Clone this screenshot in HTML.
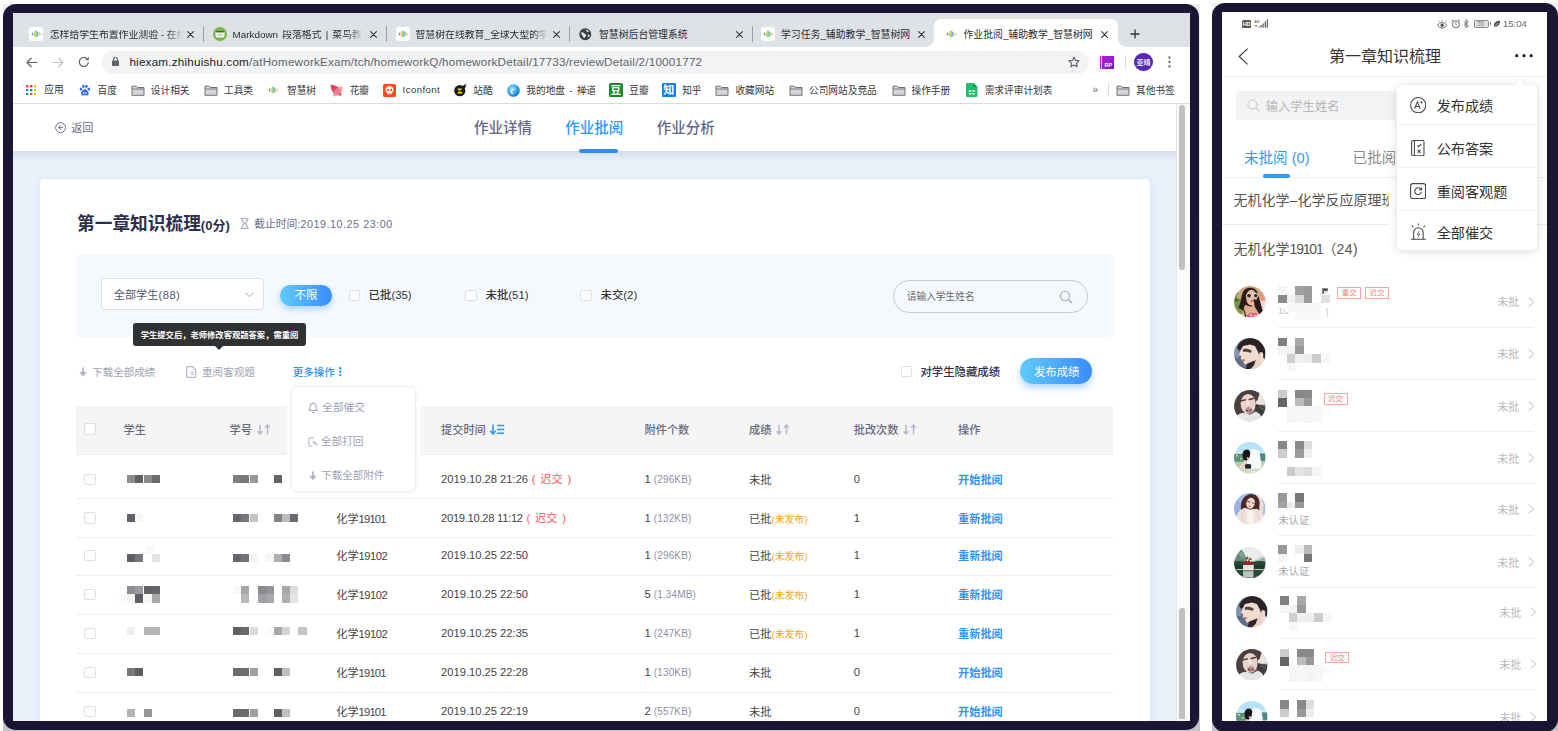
<!DOCTYPE html>
<html lang="zh-CN">
<head>
<meta charset="utf-8">
<title>作业批阅_辅助教学_智慧树网</title>
<style>
*{box-sizing:border-box;margin:0;padding:0}
html,body{width:1558px;height:731px;overflow:hidden;background:#fff}
body{position:relative;font-family:"Liberation Sans","Noto Sans CJK SC",sans-serif;color:#333;-webkit-font-smoothing:antialiased}
.abs,.t,.b{position:absolute}
.t{white-space:nowrap;line-height:1}
.frame{position:absolute;border-style:solid;border-color:#1b1433;border-radius:13px;background:#fff}
.clip{position:absolute;overflow:hidden}
.in{position:absolute}
/* browser chrome */
.tabtxt{font-size:9.85px;color:#2b2e32}
.bm{font-size:9.7px;color:#34373b}
.x{font-size:11px;color:#3c4043}
.sep{position:absolute;width:1px;background:#9aa0a6}
.cb{position:absolute;width:11.5px;height:11.5px;border:1px solid #dcdfe6;border-radius:2px;background:#fff}
.th{font-size:11.2px;color:#66697a;font-weight:500}
.td{font-size:11.2px;color:#444}
.rowline{position:absolute;left:76px;width:1037px;height:1px;background:#ebeef5}
.mz{position:absolute}
.act{font-size:11.2px;color:#3392f6;font-weight:700}
.sm{font-size:10px;color:#8d90a3;letter-spacing:.12px}
.or{font-size:9.8px;color:#f5a623}
.grad{background:linear-gradient(90deg,#5fcbfb 0%,#3a8cfb 100%)}
</style>
</head>
<body>

<!-- ================= LEFT: desktop browser ================= -->
<div class="abs" style="left:2.5px;top:4px;width:1197px;height:727px;background:linear-gradient(180deg,#efefef 0%,#e4e4e6 50%,#c4c4c9 100%)"></div>
<div class="frame" id="frameL" style="left:3px;top:4px;width:1196px;height:726px;border-width:9px 9px 9px 10px"></div>
<div class="clip" id="L" style="left:13px;top:13px;width:1177px;height:708px;background:#e9f2fb">
<div class="in" id="Lc" style="left:-13px;top:-13px;width:1558px;height:731px">

<!-- tab strip -->
<div class="abs" style="left:13px;top:13px;width:1177px;height:34px;background:#dee1e6"></div>
<!-- toolbar + bookmarks -->
<div class="abs" style="left:13px;top:47px;width:1177px;height:56px;background:#fff"></div>
<div class="abs" style="left:13px;top:103px;width:1177px;height:1px;background:#dadce0"></div>

<svg class="abs" style="left:924px;top:19px" width="204" height="28" viewBox="0 0 204 28"><path d="M0 28c5.5 0 10-3 10-9V7c0-4 3-7 7-7h170c4 0 7 3 7 7v12c0 6 4.5 9 10 9z" fill="#fff"/></svg>
<svg class="abs" style="left:29px;top:27px" width="14" height="14" viewBox="0 0 14 14"><rect x="0" y="0" width="14" height="14" rx="3" fill="#fff"/><rect x="1.6" y="6.5" width="1" height="1" rx=".5" fill="#7ac143"/><rect x="3.1" y="5.6" width="1.1" height="2.8" rx=".5" fill="#4a90e2"/><rect x="4.7" y="4.6" width="1.1" height="4.8" rx=".5" fill="#f5c63c"/><rect x="6.35" y="3.6" width="1.3" height="6.8" rx=".6" fill="#6cc04a"/><rect x="8.2" y="4.6" width="1.1" height="4.8" rx=".5" fill="#4a90e2"/><rect x="9.8" y="5.6" width="1.1" height="2.8" rx=".5" fill="#f5c63c"/><rect x="11.4" y="6.4" width="1.1" height="1.2" rx=".5" fill="#ee5350"/></svg>
<span class="t tabtxt" id="tab1" style="left:49.7px;top:30.37px;width:133px;overflow:hidden;-webkit-mask-image:linear-gradient(90deg,#000 88%,transparent 100%)">怎样给学生布置作业测验 - 在线</span>
<svg class="abs" style="left:187.2px;top:30.799999999999997px" width="7" height="7" viewBox="0 0 7 7"><path d="M.6.6l5.8 5.8M6.4.6L.6 6.4" stroke="#30343a" stroke-width="1.1" stroke-linecap="round"/></svg>
<div class="sep" style="left:203px;top:26px;height:16px"></div>
<svg class="abs" style="left:212.8px;top:27.3px" width="14" height="14" viewBox="0 0 14 14"><circle cx="7" cy="7" r="7" fill="#78b943"/><rect x="2.6" y="3.6" width="8.8" height="6.8" rx="1.4" fill="#fff"/><rect x="2.6" y="3.6" width="8.8" height="1.8" rx=".9" fill="#3f6f2a"/><path d="M5.4 6.8L4.5 7.8l.9 1M8.6 6.8l.9 1-.9 1M7.4 6.7l-.8 2.2" stroke="#3f6f2a" stroke-width=".6" fill="none"/></svg>
<span class="t tabtxt" id="tab2" style="word-spacing:1.4px;left:232.6px;top:30.37px;width:130px;overflow:hidden;-webkit-mask-image:linear-gradient(90deg,#000 88%,transparent 100%)">Markdown 段落格式 | 菜鸟教程</span>
<svg class="abs" style="left:370.2px;top:30.799999999999997px" width="7" height="7" viewBox="0 0 7 7"><path d="M.6.6l5.8 5.8M6.4.6L.6 6.4" stroke="#30343a" stroke-width="1.1" stroke-linecap="round"/></svg>
<div class="sep" style="left:386px;top:26px;height:16px"></div>
<svg class="abs" style="left:395.5px;top:27px" width="14" height="14" viewBox="0 0 14 14"><rect x="0" y="0" width="14" height="14" rx="3" fill="#fff"/><rect x="1.6" y="6.5" width="1" height="1" rx=".5" fill="#7ac143"/><rect x="3.1" y="5.6" width="1.1" height="2.8" rx=".5" fill="#4a90e2"/><rect x="4.7" y="4.6" width="1.1" height="4.8" rx=".5" fill="#f5c63c"/><rect x="6.35" y="3.6" width="1.3" height="6.8" rx=".6" fill="#6cc04a"/><rect x="8.2" y="4.6" width="1.1" height="4.8" rx=".5" fill="#4a90e2"/><rect x="9.8" y="5.6" width="1.1" height="2.8" rx=".5" fill="#f5c63c"/><rect x="11.4" y="6.4" width="1.1" height="1.2" rx=".5" fill="#ee5350"/></svg>
<span class="t tabtxt" id="tab3" style="left:415.5px;top:30.37px;width:131px;overflow:hidden;-webkit-mask-image:linear-gradient(90deg,#000 90%,transparent 100%)">智慧树在线教育_全球大型的学分</span>
<svg class="abs" style="left:553px;top:30.799999999999997px" width="7" height="7" viewBox="0 0 7 7"><path d="M.6.6l5.8 5.8M6.4.6L.6 6.4" stroke="#30343a" stroke-width="1.1" stroke-linecap="round"/></svg>
<div class="sep" style="left:569px;top:26px;height:16px"></div>
<svg class="abs" style="left:579px;top:28px" width="12.5" height="12.5" viewBox="0 0 16 16"><circle cx="8" cy="8" r="7.6" fill="#3c4043"/><path d="M3 5.5c1.5-.5 2.5.3 3.5 1.3 1 1 2 .7 2.5 1.7s-.5 2.5-1.5 3.5-1.7 1-2-.2S4.5 10 3.8 9 2.5 6.5 3 5.5zM9 2.3c1.5 0 3 .8 3.8 2.2-.8.8-2 .5-2.8 0S8.5 3 9 2.3zM11.5 8.5c.8-.3 1.8 0 2.3.5-.3 1.5-1 2.5-2 3.2-.5-1-.8-2.7-.3-3.7z" fill="#dee1e6"/></svg>
<span class="t tabtxt" id="tab4" style="left:599px;top:30.37px">智慧树后台管理系统</span>
<svg class="abs" style="left:735.5px;top:30.799999999999997px" width="7" height="7" viewBox="0 0 7 7"><path d="M.6.6l5.8 5.8M6.4.6L.6 6.4" stroke="#30343a" stroke-width="1.1" stroke-linecap="round"/></svg>
<div class="sep" style="left:752px;top:26px;height:16px"></div>
<svg class="abs" style="left:761px;top:27px" width="14" height="14" viewBox="0 0 14 14"><rect x="0" y="0" width="14" height="14" rx="3" fill="#fff"/><rect x="1.6" y="6.5" width="1" height="1" rx=".5" fill="#7ac143"/><rect x="3.1" y="5.6" width="1.1" height="2.8" rx=".5" fill="#4a90e2"/><rect x="4.7" y="4.6" width="1.1" height="4.8" rx=".5" fill="#f5c63c"/><rect x="6.35" y="3.6" width="1.3" height="6.8" rx=".6" fill="#6cc04a"/><rect x="8.2" y="4.6" width="1.1" height="4.8" rx=".5" fill="#4a90e2"/><rect x="9.8" y="5.6" width="1.1" height="2.8" rx=".5" fill="#f5c63c"/><rect x="11.4" y="6.4" width="1.1" height="1.2" rx=".5" fill="#ee5350"/></svg>
<span class="t tabtxt" id="tab5" style="left:781px;top:30.37px">学习任务_辅助教学_智慧树网</span>
<svg class="abs" style="left:918.3px;top:30.799999999999997px" width="7" height="7" viewBox="0 0 7 7"><path d="M.6.6l5.8 5.8M6.4.6L.6 6.4" stroke="#30343a" stroke-width="1.1" stroke-linecap="round"/></svg>
<svg class="abs" style="left:943.5px;top:27px" width="14" height="14" viewBox="0 0 14 14"><rect x="1.6" y="6.5" width="1" height="1" rx=".5" fill="#7ac143"/><rect x="3.1" y="5.6" width="1.1" height="2.8" rx=".5" fill="#4a90e2"/><rect x="4.7" y="4.6" width="1.1" height="4.8" rx=".5" fill="#f5c63c"/><rect x="6.35" y="3.6" width="1.3" height="6.8" rx=".6" fill="#6cc04a"/><rect x="8.2" y="4.6" width="1.1" height="4.8" rx=".5" fill="#4a90e2"/><rect x="9.8" y="5.6" width="1.1" height="2.8" rx=".5" fill="#f5c63c"/><rect x="11.4" y="6.4" width="1.1" height="1.2" rx=".5" fill="#ee5350"/></svg>
<span class="t tabtxt" id="tab6" style="left:963.5px;top:30.37px">作业批阅_辅助教学_智慧树网</span>
<svg class="abs" style="left:1101px;top:30.799999999999997px" width="7" height="7" viewBox="0 0 7 7"><path d="M.6.6l5.8 5.8M6.4.6L.6 6.4" stroke="#30343a" stroke-width="1.1" stroke-linecap="round"/></svg>
<svg class="abs" style="left:1130.3px;top:29.3px" width="10" height="10" viewBox="0 0 10 10"><path d="M5 .5v9M.5 5h9" stroke="#30343a" stroke-width="1.3"/></svg>
<svg class="abs" style="left:25.5px;top:56.5px" width="12" height="11" viewBox="0 0 12 11"><path d="M5.5 1L1 5.5 5.5 10M1.2 5.5H11.5" stroke="#5f6368" stroke-width="1.2" fill="none"/></svg>
<svg class="abs" style="left:52px;top:56.5px" width="12" height="11" viewBox="0 0 12 11"><path d="M6.5 1L11 5.5 6.5 10M10.8 5.5H.5" stroke="#bdc1c6" stroke-width="1.1" fill="none"/></svg>
<svg class="abs" style="left:77.5px;top:56.2px" width="12" height="12" viewBox="0 0 12 12"><path d="M10.3 6A4.5 4.5 0 1 1 8.9 2.7" stroke="#5f6368" stroke-width="1.2" fill="none"/><path d="M10.8.8v3.4H7.4z" fill="#5f6368"/></svg>
<div class="abs" style="left:101.7px;top:51px;width:987px;height:22.5px;border-radius:11.3px;background:#f1f3f4"></div>
<svg class="abs" style="left:112.3px;top:57.3px" width="7" height="9" viewBox="0 0 7 9"><rect x="0" y="3.6" width="7" height="5.4" rx=".8" fill="#5f6368"/><path d="M1.5 4V2.5a2 2 0 0 1 4 0V4" stroke="#5f6368" stroke-width="1.1" fill="none"/></svg>
<span class="t" id="url" style="left:129.4px;top:56.45px;font-size:11.7px;color:#202124;letter-spacing:.2px">hiexam.zhihuishu.com<span style="color:#61656a">/atHomeworkExam/tch/homeworkQ/homeworkDetail/17733/reviewDetail/2/10001772</span></span>
<svg class="abs" style="left:1068.3px;top:56.2px" width="12" height="12" viewBox="0 0 12 12"><path d="M6 1.1l1.5 3.3 3.6.4-2.7 2.4.8 3.5L6 8.9l-3.2 1.8.8-3.5L.9 4.8l3.6-.4z" stroke="#5f6368" stroke-width="1.1" fill="none" stroke-linejoin="round"/></svg>
<div class="abs" style="left:1100px;top:55.5px;width:13.7px;height:13.5px;background:linear-gradient(135deg,#c218c9 0%,#8c1fd6 60%,#6a12b8 100%)"></div>
<div class="abs" style="left:1101.3px;top:55.5px;width:1.2px;height:13.5px;background:#f3b5f6"></div>
<span class="t" style="left:1104.5px;top:63.45px;font-size:5.5px;font-weight:700;color:#fff">RP</span>
<div class="abs" style="left:1125px;top:55px;width:1px;height:14px;background:#dadce0"></div>
<div class="abs" style="left:1134.4px;top:52.8px;width:18.4px;height:18.4px;border-radius:50%;background:#5529b5"></div>
<span class="t" style="left:1136.6px;top:58.7px;font-size:7px;color:#fff;font-weight:500;letter-spacing:-.2px">亚晴</span>
<svg class="abs" style="left:1168px;top:56px" width="3" height="12" viewBox="0 0 3 12"><circle cx="1.5" cy="1.5" r="1.15" fill="#5f6368"/><circle cx="1.5" cy="6" r="1.15" fill="#5f6368"/><circle cx="1.5" cy="10.5" r="1.15" fill="#5f6368"/></svg>
<svg class="abs" style="left:26px;top:84.7px" width="10.4" height="10.4" viewBox="0 0 10.4 10.4"><rect x="0" y="0" width="2.4" height="2.4" fill="#e8453c"/><rect x="4" y="0" width="2.4" height="2.4" fill="#e8453c"/><rect x="8" y="0" width="2.4" height="2.4" fill="#f4b400"/><rect x="0" y="4" width="2.4" height="2.4" fill="#4285f4"/><rect x="4" y="4" width="2.4" height="2.4" fill="#0f9d58"/><rect x="8" y="4" width="2.4" height="2.4" fill="#f4b400"/><rect x="0" y="8" width="2.4" height="2.4" fill="#0f9d58"/><rect x="4" y="8" width="2.4" height="2.4" fill="#e8453c"/><rect x="8" y="8" width="2.4" height="2.4" fill="#f4b400"/></svg>
<span class="t bm" id="bm1" style="left:44.3px;top:85.15px">应用</span>
<svg class="abs" style="left:79px;top:84px" width="11.5" height="12" viewBox="0 0 12 12"><ellipse cx="2" cy="5" rx="1.3" ry="1.7" fill="#2a6be8"/><ellipse cx="4.5" cy="2.2" rx="1.3" ry="1.7" fill="#2a6be8"/><ellipse cx="7.7" cy="2.2" rx="1.3" ry="1.7" fill="#2a6be8"/><ellipse cx="10.2" cy="5" rx="1.3" ry="1.7" fill="#2a6be8"/><path d="M6.1 5.2c1.7 0 2.3 1.4 3.3 2.6 1 1.2 1.1 2.9-.3 3.6-1.2.6-2 .1-3 .1s-1.8.5-3-.1C1.7 10.7 1.8 9 2.8 7.8c1-1.2 1.6-2.6 3.3-2.6z" fill="#2a6be8"/><path d="M4.3 8h1.2v2.3H4.3zM6.6 8.3h1.3v2H6.6z" fill="#fff" opacity=".9"/></svg>
<span class="t bm" id="bm2" style="left:97.6px;top:86.15px">百度</span>
<svg class="abs" style="left:130.5px;top:84.5px" width="14" height="11" viewBox="0 0 14 11"><path d="M1 1.2h4.3l1.1 1.3H13v7.8H1z" fill="#d5d6d8" stroke="#6e7175" stroke-width="1" stroke-linejoin="round"/><path d="M1 4h12" stroke="#6e7175" stroke-width=".9"/></svg>
<span class="t bm" id="bm3" style="left:150.8px;top:86.15px">设计相关</span>
<svg class="abs" style="left:204px;top:84.5px" width="14" height="11" viewBox="0 0 14 11"><path d="M1 1.2h4.3l1.1 1.3H13v7.8H1z" fill="#d5d6d8" stroke="#6e7175" stroke-width="1" stroke-linejoin="round"/><path d="M1 4h12" stroke="#6e7175" stroke-width=".9"/></svg>
<span class="t bm" id="bm4" style="left:224px;top:86.15px">工具类</span>
<svg class="abs" style="left:266.3px;top:83px" width="14" height="14" viewBox="0 0 14 14"><rect x="1.6" y="6.5" width="1" height="1" rx=".5" fill="#7ac143"/><rect x="3.1" y="5.6" width="1.1" height="2.8" rx=".5" fill="#4a90e2"/><rect x="4.7" y="4.6" width="1.1" height="4.8" rx=".5" fill="#f5c63c"/><rect x="6.35" y="3.6" width="1.3" height="6.8" rx=".6" fill="#6cc04a"/><rect x="8.2" y="4.6" width="1.1" height="4.8" rx=".5" fill="#4a90e2"/><rect x="9.8" y="5.6" width="1.1" height="2.8" rx=".5" fill="#f5c63c"/><rect x="11.4" y="6.4" width="1.1" height="1.2" rx=".5" fill="#ee5350"/></svg>
<span class="t bm" id="bm5" style="left:287px;top:86.15px">智慧树</span>
<svg class="abs" style="left:329.8px;top:83.5px" width="13" height="13" viewBox="0 0 13 13"><path d="M.6.8C7 .8 11.400 4.600 11.400 11.800 4.600 11.800.6 7.400.6.8z" fill="#e0485e"/><path d="M12.600 2.200c0 6-3.400 10-9.600 10.200C3.200 6.400 6.800 2.600 12.600 2.200z" fill="#f08a98" opacity=".8"/></svg>
<span class="t bm" id="bm6" style="left:349.7px;top:86.15px">花瓣</span>
<svg class="abs" style="left:382.8px;top:83.5px" width="13" height="13" viewBox="0 0 13 13"><rect width="13" height="13" rx="1.5" fill="#ff4a1a"/><path d="M6.5 2.2c2.3 0 4 1.5 4 3.6 0 1.3-.8 2.3-1.8 2.9v1.5H4.3V8.7C3.3 8.1 2.5 7.1 2.5 5.8c0-2.1 1.7-3.6 4-3.6z" fill="#fff"/><circle cx="4.9" cy="5.9" r="1.1" fill="#ff4a1a"/><circle cx="8.1" cy="5.9" r="1.1" fill="#ff4a1a"/><path d="M5.6 9.2h.6v1.3h-.6zM6.8 9.2h.6v1.3h-.6z" fill="#ff4a1a"/></svg>
<span class="t bm" id="bm7" style="left:402.6px;top:85.15px;letter-spacing:.38px">Iconfont</span>
<svg class="abs" style="left:453.5px;top:83px" width="13.5" height="13.5" viewBox="0 0 14 14"><circle cx="6" cy="8" r="5.8" fill="#1c1c1c"/><path d="M8 3.5l5-3-1.5 3 2.2-.5-3.5 3z" fill="#1c1c1c"/><path d="M3.8 5.8h4.6L5.6 9.4h2.9v1.4H3.3l2.9-3.6H3.8z" fill="#ffd800"/></svg>
<span class="t bm" id="bm8" style="left:473.3px;top:86.15px">站酷</span>
<svg class="abs" style="left:506.5px;top:83.5px" width="13" height="13" viewBox="0 0 13 13"><defs><radialGradient id="zt" cx=".4" cy=".35" r=".7"><stop offset="0" stop-color="#9fe0ff"/><stop offset=".6" stop-color="#2a9fe6"/><stop offset="1" stop-color="#1278c8"/></radialGradient></defs><circle cx="6.5" cy="6.5" r="6.3" fill="url(#zt)"/><path d="M3 7.5c1-2.5 4-3.5 6-2-1.5-.2-3 .3-3.5 1.8s.8 2.7 2.5 2.2c-1.8 1.5-5 .6-5-2z" fill="#e6f7ff" opacity=".9"/></svg>
<span class="t bm" id="bm9" style="left:526.3px;top:86.15px;word-spacing:1.5px">我的地盘 - 禅道</span>
<div class="abs" style="left:609.2px;top:83.3px;width:13.5px;height:13.5px;background:#1d8a2b;border-radius:1.5px"></div><span class="t" style="left:610.5px;top:85.05px;font-size:10.5px;color:#fff;font-weight:700">豆</span>
<span class="t bm" id="bm10" style="left:629.3px;top:86.15px">豆瓣</span>
<div class="abs" style="left:662.2px;top:83.3px;width:13.5px;height:13.5px;background:#1080f0;border-radius:1px"></div><span class="t" style="left:663.3px;top:84.8px;font-size:11px;color:#fff;font-weight:700">知</span>
<span class="t bm" id="bm11" style="left:682.2px;top:86.15px">知乎</span>
<svg class="abs" style="left:715px;top:84.5px" width="14" height="11" viewBox="0 0 14 11"><path d="M1 1.2h4.3l1.1 1.3H13v7.8H1z" fill="#d5d6d8" stroke="#6e7175" stroke-width="1" stroke-linejoin="round"/><path d="M1 4h12" stroke="#6e7175" stroke-width=".9"/></svg>
<span class="t bm" id="bm12" style="left:735.4px;top:86.15px">收藏网站</span>
<svg class="abs" style="left:788.6px;top:84.5px" width="14" height="11" viewBox="0 0 14 11"><path d="M1 1.2h4.3l1.1 1.3H13v7.8H1z" fill="#d5d6d8" stroke="#6e7175" stroke-width="1" stroke-linejoin="round"/><path d="M1 4h12" stroke="#6e7175" stroke-width=".9"/></svg>
<span class="t bm" id="bm13" style="left:809px;top:86.15px">公司网站及竞品</span>
<svg class="abs" style="left:891.5px;top:84.5px" width="14" height="11" viewBox="0 0 14 11"><path d="M1 1.2h4.3l1.1 1.3H13v7.8H1z" fill="#d5d6d8" stroke="#6e7175" stroke-width="1" stroke-linejoin="round"/><path d="M1 4h12" stroke="#6e7175" stroke-width=".9"/></svg>
<span class="t bm" id="bm14" style="left:911.5px;top:86.15px">操作手册</span>
<svg class="abs" style="left:966px;top:83px" width="11.5" height="14" viewBox="0 0 11.5 14"><path d="M1.2 0h6.3l4 4v8.8c0 .7-.5 1.2-1.2 1.2H1.2C.5 14 0 13.5 0 12.8V1.2C0 .5.5 0 1.2 0z" fill="#1fbf6b"/><path d="M7.5 0l4 4h-4z" fill="#12924e"/><path d="M2.8 7.2h2.4v1.6H2.8zM6.3 7.2h2.4v1.6H6.3zM2.8 9.9h2.4v1.6H2.8zM6.3 9.9h2.4v1.6H6.3z" fill="#fff"/></svg>
<span class="t bm" id="bm15" style="left:984.7px;top:86.15px">需求评审计划表</span>
<span class="t" style="left:1092.5px;top:84.5px;font-size:10px;color:#5f6368">»</span>
<div class="abs" style="left:1107.5px;top:83px;width:1px;height:14px;background:#dadce0"></div>
<svg class="abs" style="left:1115.5px;top:84.5px" width="14" height="11" viewBox="0 0 14 11"><path d="M1 1.2h4.3l1.1 1.3H13v7.8H1z" fill="#d5d6d8" stroke="#6e7175" stroke-width="1" stroke-linejoin="round"/><path d="M1 4h12" stroke="#6e7175" stroke-width=".9"/></svg>
<span class="t bm" id="bm16" style="left:1136px;top:86.15px">其他书签</span>

<!-- PAGE -->
<div class="abs" id="pagehead" style="left:13px;top:104px;width:1163px;height:47px;background:#fff"></div>
<div class="abs" style="left:13px;top:151px;width:1163px;height:13px;background:linear-gradient(180deg,#d3deeb 0%,#dde7f3 30%,#e6eff9 70%,#e9f2fb 100%)"></div>
<div class="abs" id="card" style="left:39.5px;top:178.5px;width:1110px;height:560px;background:#fff;border-radius:5px;box-shadow:0 0 10px rgba(170,190,215,.25)"></div>
<div class="abs" id="filter" style="left:76px;top:253.5px;width:1037px;height:83px;background:#f5f9fe;border-radius:4px"></div>
<div class="abs" id="thead" style="left:76px;top:406px;width:1037px;height:48px;background:#f5f5f6"></div>

<svg class="abs" style="left:55.3px;top:121.7px" width="11.2" height="11.2" viewBox="0 0 12 12"><circle cx="6" cy="6" r="5.3" fill="none" stroke="#666a86" stroke-width="1"/><path d="M6.3 3.6L3.9 6l2.4 2.4M4.1 6H8.6" stroke="#666a86" stroke-width="1" fill="none"/></svg>
<span class="t" id="back" style="left:71.2px;top:122.75px;font-size:11.1px;color:#666a86">返回</span>
<span class="t" id="nav1" style="left:473.9px;top:121.45px;font-size:14.5px;color:#636786;font-weight:500">作业详情</span>
<span class="t" id="nav2" style="left:565.3px;top:121.45px;font-size:14.5px;color:#2b97f5;font-weight:500">作业批阅</span>
<span class="t" id="nav3" style="left:656.7px;top:121.45px;font-size:14.5px;color:#636786;font-weight:500">作业分析</span>
<div class="abs" style="left:578.6px;top:149.3px;width:39px;height:3.6px;border-radius:2px;background:#2d8ff6"></div>
<span class="t" id="title" style="left:77px;top:216.45px;font-size:17.7px;color:#2c2f4b;font-weight:700">第一章知识梳理<span style="font-size:13px">(0分)</span></span>
<svg class="abs" style="left:240px;top:217.5px" width="9.5" height="11" viewBox="0 0 9.5 11"><path d="M.8.7h7.9M.8 10.3h7.9M1.9.9c0 2.6 2.1 3.3 2.1 4.6S1.9 7.5 1.9 10.1M7.6.9c0 2.6-2.1 3.3-2.1 4.6s2.1 2 2.1 4.6" stroke="#b2b4c6" stroke-width="1.3" fill="none"/></svg>
<span class="t" id="ddl" style="left:254.2px;top:219.2px;font-size:10.8px;color:#6c6f88">截止时间:<span style="letter-spacing:.52px">2019.10.25 23:00</span></span>
<div class="abs" style="left:100.6px;top:278.3px;width:163px;height:32.2px;border:1px solid #dcdfe6;border-radius:4px;background:#fff"></div>
<span class="t" id="sel" style="left:113.7px;top:289.9px;font-size:11.2px;color:#55586a">全部学生<span style="letter-spacing:.5px">(88)</span></span>
<svg class="abs" style="left:244.6px;top:291.6px" width="9" height="5.6" viewBox="0 0 9 5.6"><path d="M.6.700l3.900 4L8.400.7" stroke="#c0c4cc" stroke-width="1.050" fill="none"/></svg>
<div class="abs grad" style="left:280px;top:285px;width:52px;height:20.6px;border-radius:10.3px;box-shadow:0 3px 6px rgba(70,150,250,.4)"></div>
<span class="t" id="nolimit" style="left:294.5px;top:290.45px;font-size:11.5px;color:#fff">不限</span>
<div class="cb" style="left:348.5px;top:289.5px"></div>
<span class="t" id="f1" style="left:368.6px;top:289.5px;font-size:11.4px;color:#333;font-weight:500">已批(35)</span>
<div class="cb" style="left:465.4px;top:289.5px"></div>
<span class="t" id="f2" style="left:485.5px;top:289.5px;font-size:11.4px;color:#333;font-weight:500">未批(51)</span>
<div class="cb" style="left:580.4px;top:289.5px"></div>
<span class="t" id="f3" style="left:600.5px;top:289.5px;font-size:11.4px;color:#333;font-weight:500">未交(2)</span>
<div class="abs" style="left:892.5px;top:280.2px;width:195.7px;height:32.4px;border:1px solid #c9c9d0;border-radius:16.2px;background:#f5f9fe"></div>
<span class="t" id="ph" style="left:906.8px;top:292.35px;font-size:9.7px;color:#66686f">请输入学生姓名</span>
<svg class="abs" style="left:1059px;top:289.5px" width="14" height="14" viewBox="0 0 14 14"><circle cx="6" cy="6" r="4.6" fill="none" stroke="#b7b4c8" stroke-width="1.4"/><path d="M9.3 9.3l3.3 3.3" stroke="#b7b4c8" stroke-width="1.8" stroke-linecap="round"/></svg>
<div class="abs" style="left:133.4px;top:323.2px;width:172.5px;height:23px;border-radius:3px;background:#303133"></div>
<div class="abs" style="left:215.4px;top:346px;width:0;height:0;border-left:4px solid transparent;border-right:4px solid transparent;border-top:4px solid #303133"></div>
<span class="t" id="tip" style="left:140.7px;top:330.65px;font-size:8.3px;color:#fff;font-weight:700">学生提交后，老师修改客观题答案，需重阅</span>
<svg class="abs" style="left:78.8px;top:367.4px" width="8" height="9.700" viewBox="0 0 7 8.5"><path d="M3.5.4v5" stroke="#aeb0c3" stroke-width="1.5" fill="none"/><path d="M.2 4.3h6.6L3.5 8.3z" fill="#aeb0c3"/></svg>
<span class="t" id="a1" style="left:91.9px;top:366.7px;font-size:10.6px;color:#a0a3b6">下载全部成绩</span>
<svg class="abs" style="left:186.2px;top:366px" width="10.5" height="12" viewBox="0 0 10.5 12"><path d="M1.7.7h4.8l3.3 3.3v6.3c0 .6-.4 1-1 1H1.7c-.6 0-1-.4-1-1V1.7c0-.6.4-1 1-1z" fill="none" stroke="#b4b6c8" stroke-width="1.2"/><path d="M5 6.3h2.8M5 8.500h2.800" stroke="#b4b6c8" stroke-width="1.150"/></svg>
<span class="t" id="a2" style="left:202px;top:366.7px;font-size:10.6px;color:#a0a3b6">重阅客观题</span>
<span class="t" id="a3" style="left:292.7px;top:367.45px;font-size:10.5px;color:#2b97f5;font-weight:500">更多操作</span>
<svg class="abs" style="left:339px;top:367.3px" width="2.6" height="9.4" viewBox="0 0 2.6 9.4"><circle cx="1.3" cy="1.3" r="1.2" fill="#2b97f5"/><circle cx="1.3" cy="4.7" r="1.2" fill="#2b97f5"/><circle cx="1.3" cy="8.1" r="1.2" fill="#2b97f5"/></svg>
<div class="cb" style="left:900.5px;top:365.5px"></div>
<span class="t" id="hide" style="left:920.4px;top:366.6px;font-size:11.4px;color:#2c2f4b;font-weight:500">对学生隐藏成绩</span>
<div class="abs grad" style="left:1020.4px;top:358.2px;width:71.6px;height:26.2px;border-radius:13.1px;box-shadow:0 4px 7px rgba(70,150,250,.4)"></div>
<span class="t" id="pub" style="left:1034px;top:366.62px;font-size:11.35px;color:#fff">发布成绩</span>
<div class="cb" style="left:84.2px;top:423.4px"></div>
<span class="t th" id="th1" style="left:123.5px;top:424.8px">学生</span>
<span class="t th" id="th2" style="left:229.5px;top:424.8px">学号</span>
<span class="t th" id="th3" style="left:441px;top:424.8px">提交时间</span>
<span class="t th" id="th4" style="left:644.5px;top:424.8px">附件个数</span>
<span class="t th" id="th5" style="left:749.1px;top:424.8px">成绩</span>
<span class="t th" id="th6" style="left:853.7px;top:424.8px">批改次数</span>
<span class="t th" id="th7" style="left:958px;top:424.8px">操作</span>
<svg class="abs" style="left:256.8px;top:424px" width="14.5" height="11" viewBox="0 0 14.5 11"><path d="M3 .8v9M.6 7.3L3 10l2.4-2.7" stroke="#b6b8c9" stroke-width="1.5" fill="none"/><path d="M10.5 10.2v-9M8.1 3.7L10.5 1l2.4 2.7" stroke="#b6b8c9" stroke-width="1.5" fill="none"/></svg>
<svg class="abs" style="left:490.2px;top:424px" width="14.5" height="11" viewBox="0 0 14.5 11"><path d="M3 .6v9" stroke="#2b97f5" stroke-width="1.6" fill="none"/><path d="M.3 6.6L3 10.2l2.7-3.6" stroke="#2b97f5" stroke-width="1.5" fill="none" stroke-linejoin="round"/><path d="M7 1.6h7.2M7 5.4h7.2M7 9.2h7.2" stroke="#2b97f5" stroke-width="1.5"/></svg>
<svg class="abs" style="left:775.8px;top:424px" width="14.5" height="11" viewBox="0 0 14.5 11"><path d="M3 .8v9M.6 7.3L3 10l2.4-2.7" stroke="#b6b8c9" stroke-width="1.5" fill="none"/><path d="M10.5 10.2v-9M8.1 3.7L10.5 1l2.4 2.7" stroke="#b6b8c9" stroke-width="1.5" fill="none"/></svg>
<svg class="abs" style="left:903px;top:424px" width="14.5" height="11" viewBox="0 0 14.5 11"><path d="M3 .8v9M.6 7.3L3 10l2.4-2.7" stroke="#b6b8c9" stroke-width="1.5" fill="none"/><path d="M10.5 10.2v-9M8.1 3.7L10.5 1l2.4 2.7" stroke="#b6b8c9" stroke-width="1.5" fill="none"/></svg>
<div class="rowline" style="top:498.1px"></div>
<div class="rowline" style="top:537.3px"></div>
<div class="rowline" style="top:574.9px"></div>
<div class="rowline" style="top:613.8px"></div>
<div class="rowline" style="top:652.8px"></div>
<div class="rowline" style="top:691.9px"></div>
<div class="rowline" style="top:453.5px;background:#f0f0f4"></div>
<div class="cb" style="left:84.2px;top:473.5px"></div>
<span class="t td" id="tm0" style="left:441px;top:473.7px">2019.10.28 21:26<span style="color:#f7585f;margin-left:3.6px;word-spacing:1.8px">( 迟交 )</span></span>
<span class="t td" id="at0" style="left:644.5px;top:473.7px">1 <span class="sm">(296KB)</span></span>
<span class="t td" id="gr0" style="left:749.1px;top:474.7px">未批</span>
<span class="t td" id="cn0" style="left:853.7px;top:473.7px">0</span>
<span class="t act" id="ac0" style="left:958px;top:474.7px">开始批阅</span>
<div class="cb" style="left:84.2px;top:512.4px"></div>
<span class="t td" id="cls1" style="left:336.2px;top:513.6px">化学<span style="letter-spacing:-.8px">19101</span></span>
<span class="t td" id="tm1" style="left:441px;top:512.6px"><span style="letter-spacing:-.28px">2019.10.28 11:12</span><span style="color:#f7585f;margin-left:3.6px;word-spacing:1.8px">( 迟交 )</span></span>
<span class="t td" id="at1" style="left:644.5px;top:512.6px">1 <span class="sm">(132KB)</span></span>
<span class="t td" id="gr1" style="left:749.1px;top:513.6px">已批<span class="or">(未发布)</span></span>
<span class="t td" id="cn1" style="left:853.7px;top:512.6px">1</span>
<span class="t act" id="ac1" style="left:958px;top:513.6px">重新批阅</span>
<div class="cb" style="left:84.2px;top:549.9px"></div>
<span class="t td" id="cls2" style="left:336.2px;top:550.70px">化学<span style="letter-spacing:-.5px">19102</span></span>
<span class="t td" id="tm2" style="left:441px;top:549.70px">2019.10.25 22:50</span>
<span class="t td" id="at2" style="left:644.5px;top:549.70px">1 <span class="sm">(296KB)</span></span>
<span class="t td" id="gr2" style="left:749.1px;top:550.70px">已批<span class="or">(未发布)</span></span>
<span class="t td" id="cn2" style="left:853.7px;top:549.70px">1</span>
<span class="t act" id="ac2" style="left:958px;top:550.70px">重新批阅</span>
<div class="cb" style="left:84.2px;top:588.7px"></div>
<span class="t td" id="cls3" style="left:336.2px;top:589.9px">化学<span style="letter-spacing:-.5px">19102</span></span>
<span class="t td" id="tm3" style="left:441px;top:588.9px">2019.10.25 22:50</span>
<span class="t td" id="at3" style="left:644.5px;top:588.9px">5 <span class="sm">(1.34MB)</span></span>
<span class="t td" id="gr3" style="left:749.1px;top:589.9px">已批<span class="or">(未发布)</span></span>
<span class="t td" id="cn3" style="left:853.7px;top:588.9px">1</span>
<span class="t act" id="ac3" style="left:958px;top:589.9px">重新批阅</span>
<div class="cb" style="left:84.2px;top:627.7px"></div>
<span class="t td" id="cls4" style="left:336.2px;top:628.9px">化学<span style="letter-spacing:-.5px">19102</span></span>
<span class="t td" id="tm4" style="left:441px;top:627.9px">2019.10.25 22:35</span>
<span class="t td" id="at4" style="left:644.5px;top:627.9px">1 <span class="sm">(247KB)</span></span>
<span class="t td" id="gr4" style="left:749.1px;top:628.9px">已批<span class="or">(未发布)</span></span>
<span class="t td" id="cn4" style="left:853.7px;top:627.9px">1</span>
<span class="t act" id="ac4" style="left:958px;top:628.9px">重新批阅</span>
<div class="cb" style="left:84.2px;top:666.6px"></div>
<span class="t td" id="cls5" style="left:336.2px;top:667.8px">化学<span style="letter-spacing:-.8px">19101</span></span>
<span class="t td" id="tm5" style="left:441px;top:666.8px">2019.10.25 22:28</span>
<span class="t td" id="at5" style="left:644.5px;top:666.8px">1 <span class="sm">(130KB)</span></span>
<span class="t td" id="gr5" style="left:749.1px;top:667.8px">未批</span>
<span class="t td" id="cn5" style="left:853.7px;top:666.8px">0</span>
<span class="t act" id="ac5" style="left:958px;top:667.8px">开始批阅</span>
<div class="cb" style="left:84.2px;top:705.7px"></div>
<span class="t td" id="cls6" style="left:336.2px;top:706.9px">化学<span style="letter-spacing:-.8px">19101</span></span>
<span class="t td" id="tm6" style="left:441px;top:705.9px">2019.10.25 22:19</span>
<span class="t td" id="at6" style="left:644.5px;top:705.9px">2 <span class="sm">(557KB)</span></span>
<span class="t td" id="gr6" style="left:749.1px;top:706.9px">未批</span>
<span class="t td" id="cn6" style="left:853.7px;top:705.9px">0</span>
<span class="t act" id="ac6" style="left:958px;top:706.9px">开始批阅</span>
<i class="mz" style="left:127.2px;top:475px;width:8.2px;height:8.2px;background:#8c8c90"></i><i class="mz" style="left:135.3px;top:475px;width:8.2px;height:8.2px;background:#616166"></i><i class="mz" style="left:143.5px;top:475px;width:8.2px;height:8.2px;background:#8c8c90"></i><i class="mz" style="left:151.7px;top:475px;width:8.2px;height:8.2px;background:#6c6c71"></i><i class="mz" style="left:233.2px;top:475px;width:8.2px;height:8.2px;background:#7c7c81"></i><i class="mz" style="left:241.3px;top:475px;width:8.2px;height:8.2px;background:#78787d"></i><i class="mz" style="left:249.5px;top:475px;width:8.2px;height:8.2px;background:#98989c"></i><i class="mz" style="left:273.9px;top:475px;width:8.2px;height:8.2px;background:#616166"></i><i class="mz" style="left:127.2px;top:514.2px;width:8.2px;height:8.2px;background:#616166"></i><i class="mz" style="left:135.3px;top:514.2px;width:8.2px;height:8.2px;background:#f7f7f7"></i><i class="mz" style="left:233.2px;top:514.2px;width:8.2px;height:8.2px;background:#66666b"></i><i class="mz" style="left:241.3px;top:514.2px;width:8.2px;height:8.2px;background:#77777c"></i><i class="mz" style="left:249.5px;top:514.2px;width:8.2px;height:8.2px;background:#c4c4c6"></i><i class="mz" style="left:273.9px;top:514.2px;width:8.2px;height:8.2px;background:#828286"></i><i class="mz" style="left:282.1px;top:514.2px;width:8.2px;height:8.2px;background:#bcbcbe"></i><i class="mz" style="left:290.2px;top:514.2px;width:8.2px;height:8.2px;background:#6a6a6f"></i><i class="mz" style="left:127.2px;top:553.8px;width:8.2px;height:8.2px;background:#5f5f64"></i><i class="mz" style="left:135.3px;top:553.8px;width:8.2px;height:8.2px;background:#77777c"></i><i class="mz" style="left:151.7px;top:553.8px;width:8.2px;height:8.2px;background:#e4e4e5"></i><i class="mz" style="left:145.5px;top:545.8px;width:8.2px;height:8.2px;background:#f8f8f8"></i><i class="mz" style="left:233.2px;top:553.8px;width:8.2px;height:8.2px;background:#66666b"></i><i class="mz" style="left:241.3px;top:553.8px;width:8.2px;height:8.2px;background:#727277"></i><i class="mz" style="left:249.5px;top:553.8px;width:8.2px;height:8.2px;background:#f4f4f4"></i><i class="mz" style="left:265.8px;top:553.8px;width:8.2px;height:8.2px;background:#f6f6f6"></i><i class="mz" style="left:273.9px;top:553.8px;width:8.2px;height:8.2px;background:#b0b0b3"></i><i class="mz" style="left:282.1px;top:553.8px;width:8.2px;height:8.2px;background:#8c8c90"></i><i class="mz" style="left:127.2px;top:586.3px;width:8.2px;height:8.2px;background:#8e8e92"></i><i class="mz" style="left:135.3px;top:586.3px;width:8.2px;height:8.2px;background:#9a9a9e"></i><i class="mz" style="left:143.5px;top:586.3px;width:8.2px;height:8.2px;background:#626267"></i><i class="mz" style="left:151.7px;top:586.3px;width:8.2px;height:8.2px;background:#66666b"></i><i class="mz" style="left:119.2px;top:594.4px;width:8.2px;height:8.2px;background:#fafafa"></i><i class="mz" style="left:127.2px;top:594.4px;width:8.2px;height:8.2px;background:#f2f2f2"></i><i class="mz" style="left:135.3px;top:594.4px;width:8.2px;height:8.2px;background:#5f5f64"></i><i class="mz" style="left:143.5px;top:594.4px;width:8.2px;height:8.2px;background:#f6f6f6"></i><i class="mz" style="left:151.7px;top:594.4px;width:8.2px;height:8.2px;background:#a8a8ab"></i><i class="mz" style="left:233.2px;top:586.3px;width:8.2px;height:8.2px;background:#f8f8f8"></i><i class="mz" style="left:241.3px;top:586.3px;width:8.2px;height:8.2px;background:#a6a6a9"></i><i class="mz" style="left:241.3px;top:594.4px;width:8.2px;height:8.2px;background:#b8b8bb"></i><i class="mz" style="left:257.6px;top:586.3px;width:8.2px;height:8.2px;background:#8a8a8e"></i><i class="mz" style="left:265.8px;top:586.3px;width:8.2px;height:8.2px;background:#94949a"></i><i class="mz" style="left:257.6px;top:594.4px;width:8.2px;height:8.2px;background:#a0a0a4"></i><i class="mz" style="left:265.8px;top:594.4px;width:8.2px;height:8.2px;background:#a8a8ab"></i><i class="mz" style="left:282.1px;top:586.3px;width:8.2px;height:8.2px;background:#a9a9ac"></i><i class="mz" style="left:290.2px;top:586.3px;width:8.2px;height:8.2px;background:#dcdcdd"></i><i class="mz" style="left:282.1px;top:594.4px;width:8.2px;height:8.2px;background:#b0b0b3"></i><i class="mz" style="left:290.2px;top:594.4px;width:8.2px;height:8.2px;background:#e4e4e5"></i><i class="mz" style="left:127.2px;top:626.8px;width:8.2px;height:8.2px;background:#eeeeee"></i><i class="mz" style="left:143.5px;top:626.8px;width:8.2px;height:8.2px;background:#b4b4b7"></i><i class="mz" style="left:151.7px;top:626.8px;width:8.2px;height:8.2px;background:#b4b4b7"></i><i class="mz" style="left:233.2px;top:626.8px;width:8.2px;height:8.2px;background:#5f5f64"></i><i class="mz" style="left:241.3px;top:626.8px;width:8.2px;height:8.2px;background:#6a6a6f"></i><i class="mz" style="left:249.5px;top:626.8px;width:8.2px;height:8.2px;background:#dcdcdd"></i><i class="mz" style="left:265.8px;top:626.8px;width:8.2px;height:8.2px;background:#fafafa"></i><i class="mz" style="left:273.9px;top:626.8px;width:8.2px;height:8.2px;background:#a9a9ac"></i><i class="mz" style="left:282.1px;top:626.8px;width:8.2px;height:8.2px;background:#d4d4d5"></i><i class="mz" style="left:298.4px;top:626.8px;width:8.2px;height:8.2px;background:#c4c4c5"></i><i class="mz" style="left:127.2px;top:667.8px;width:8.2px;height:8.2px;background:#77777c"></i><i class="mz" style="left:135.3px;top:667.8px;width:8.2px;height:8.2px;background:#5f5f64"></i><i class="mz" style="left:233.2px;top:667.8px;width:8.2px;height:8.2px;background:#6a6a6f"></i><i class="mz" style="left:241.3px;top:667.8px;width:8.2px;height:8.2px;background:#6c6c71"></i><i class="mz" style="left:249.5px;top:667.8px;width:8.2px;height:8.2px;background:#a0a0a3"></i><i class="mz" style="left:273.9px;top:667.8px;width:8.2px;height:8.2px;background:#5f5f64"></i><i class="mz" style="left:282.1px;top:667.8px;width:8.2px;height:8.2px;background:#c0c0c2"></i><i class="mz" style="left:127.2px;top:708.8px;width:8.2px;height:8.2px;background:#b4b4b7"></i><i class="mz" style="left:143.5px;top:708.8px;width:8.2px;height:8.2px;background:#98989b"></i><i class="mz" style="left:233.2px;top:708.8px;width:8.2px;height:8.2px;background:#6a6a6f"></i><i class="mz" style="left:241.3px;top:708.8px;width:8.2px;height:8.2px;background:#6c6c71"></i><i class="mz" style="left:249.5px;top:708.8px;width:8.2px;height:8.2px;background:#a0a0a3"></i><i class="mz" style="left:273.9px;top:708.8px;width:8.2px;height:8.2px;background:#5f5f64"></i><i class="mz" style="left:282.1px;top:708.8px;width:8.2px;height:8.2px;background:#c0c0c2"></i>
<div class="abs" style="left:292.3px;top:387.4px;width:123px;height:104px;border-radius:5px;background:#fff;box-shadow:0 0 3px 0 rgba(125,135,180,.34),0 1px 2px 5px rgba(255,255,255,.8)"></div>
<svg class="abs" style="left:307.6px;top:401.6px" width="10.4" height="11.4" viewBox="0 0 10.4 11.4"><path d="M.9 8.5h8.6c-1-.9-1.3-1.9-1.3-3.7C8.2 2.8 6.9 1.5 5.2 1.5S2.2 2.8 2.2 4.8c0 1.8-.3 2.8-1.3 3.7z" stroke="#b2b4c7" stroke-width="1.25" fill="none" stroke-linejoin="round"/><path d="M4.1 10.3h2.2" stroke="#b2b4c7" stroke-width="1.25" stroke-linecap="round"/><path d="M5.2 1.5V.5" stroke="#b2b4c7" stroke-width="1.1"/></svg>
<span class="t" id="m1" style="left:322.2px;top:402.15px;font-size:10.7px;color:#9c9fb2">全部催交</span>
<svg class="abs" style="left:307.8px;top:436.6px" width="10" height="10" viewBox="0 0 10 10"><path d="M5.8.8H1.9C1.3.8.8 1.3.8 1.9v6.2c0 .6.5 1.1 1.1 1.1h2" stroke="#b9bbcc" stroke-width="1.15" fill="none"/><path d="M9.2 8.6C8.7 6.6 7.3 5.6 5.3 5.6" stroke="#b9bbcc" stroke-width="1.2" fill="none"/><path d="M6.9 3.6L4.5 5.6l2.4 2z" fill="#b9bbcc"/></svg>
<span class="t" id="m2" style="left:320.8px;top:436.05px;font-size:10.7px;color:#9c9fb2">全部打回</span>
<svg class="abs" style="left:308.6px;top:470.8px" width="7.800" height="9.400" viewBox="0 0 7 8.5"><path d="M3.5.4v5" stroke="#aeb0c3" stroke-width="1.5" fill="none"/><path d="M.2 4.3h6.6L3.5 8.3z" fill="#aeb0c3"/></svg>
<span class="t" id="m3" style="left:321.2px;top:470.15px;font-size:10.5px;color:#9c9fb2">下载全部附件</span>

<!-- scrollbar -->
<div class="abs" style="left:1176px;top:104px;width:14px;height:620px;background:#fafafa;border-left:1px solid #e8e8e8"></div>
<div class="abs" style="left:1178.7px;top:105px;width:6.4px;height:165px;background:#c1c1c1;border-radius:3.2px"></div>
<div class="abs" style="left:1178.7px;top:607.5px;width:6.4px;height:111.5px;background:#c1c1c1;border-radius:3.2px 3.2px 0 0"></div>

</div></div>

<!-- ================= RIGHT: mobile ================= -->
<div class="abs" style="left:1212px;top:2.5px;width:346px;height:729px;background:linear-gradient(180deg,#efefef 0%,#e4e4e6 50%,#c4c4c9 100%)"></div>
<div class="frame" id="frameR" style="left:1212px;top:3px;width:346px;height:729px;border-width:9px 11px 11px 10px"></div>
<div class="clip" id="R" style="left:1222px;top:12px;width:325px;height:709px;background:#fff">
<div class="in" id="Rc" style="left:-1222px;top:-12px;width:1558px;height:731px">
<svg class="abs" style="left:1242px;top:19.6px" width="9.2" height="8.6" viewBox="0 0 9.2 8.6"><rect width="9.2" height="8.6" rx="1.6" fill="#595959"/><text x="4.6" y="6.3" font-size="5.6" font-weight="700" fill="#fff" text-anchor="middle" font-family="Liberation Sans, sans-serif" letter-spacing="-.15">HD</text></svg>

<span class="t" style="left:1254.3px;top:19.60px;font-size:4px;font-weight:700;color:#666">4G</span>
<svg class="abs" style="left:1254.2px;top:19.4px" width="15" height="9" viewBox="0 0 15 9"><path d="M.8 6.2l.7 1.4.7-1.4M2.6 8V6.2" stroke="#666" stroke-width=".7" fill="none"/><rect x="4.4" y="7.4" width="1.1" height="1.3" fill="#666"/><rect x="6.4" y="6" width="1.3" height="2.7" fill="#666"/><rect x="8.5" y="4.4" width="1.3" height="4.3" fill="#666"/><rect x="10.6" y="2.4" width="1.3" height="6.3" fill="#666"/><rect x="12.7" y=".3" width="1.3" height="8.4" fill="#666"/></svg>
<svg class="abs" style="left:1437.2px;top:19.5px" width="10.4" height="9" viewBox="0 0 10.4 9"><path d="M.6 5.3C1.7 3.5 3.3 2.6 5.2 2.6s3.5.9 4.6 2.7C8.7 7.1 7.1 8 5.2 8S1.7 7.1.6 5.3z" fill="none" stroke="#555" stroke-width=".9"/><circle cx="5.2" cy="5.3" r="1.7" fill="#555"/><path d="M2 1.8L1.3.7M5.2 1.3V.1M8.4 1.8L9.1.7" stroke="#555" stroke-width=".8"/></svg>
<svg class="abs" style="left:1450.5px;top:19.3px" width="9.8" height="9.6" viewBox="0 0 9.8 9.6"><circle cx="4.9" cy="5.3" r="3.5" fill="none" stroke="#555" stroke-width=".9"/><path d="M4.9 3.3v2.1l1.3.9" stroke="#555" stroke-width=".8" fill="none"/><path d="M.7 2.2L2.5.7M9.1 2.2L7.3.7" stroke="#555" stroke-width=".9"/></svg>
<svg class="abs" style="left:1463px;top:19.3px" width="6.4" height="9.6" viewBox="0 0 6.4 9.6"><path d="M.8 2.7l4.6 4.2-2.3 2V.7l2.3 2L.8 6.9" fill="none" stroke="#555" stroke-width=".8" stroke-linejoin="round"/></svg>
<div class="abs" style="left:1473.5px;top:19.8px;width:15.6px;height:8px;border:.8px solid #8a8a8a;border-radius:1.6px;background:#e2e2e2"></div>
<div class="abs" style="left:1489.6px;top:22.3px;width:1px;height:3px;background:#777"></div>
<span class="t" style="left:1477.2px;top:20.7px;font-size:6.4px;color:#888;letter-spacing:-.2px">55</span>
<svg class="abs" style="left:1492.6px;top:19.8px" width="7.6" height="8" viewBox="0 0 7.6 8"><path d="M7.2.4C3.5.5 1 2.3.8 5.6c0 .6.1 1.1.3 1.5C4.9 7 7.3 4.6 7.2.4z" fill="#555"/><path d="M.5 7.7L5 3" stroke="#fff" stroke-width=".5"/></svg>
<span class="t" id="clock" style="left:1502.8px;letter-spacing:-.1px;top:18.80px;font-size:9.9px;color:#6e6e6e">15:04</span>
<svg class="abs" style="left:1237.5px;top:47.5px" width="11" height="17" viewBox="0 0 11 17"><path d="M9.6.7L1.2 8.5l8.4 7.8" fill="none" stroke="#333" stroke-width="1.1"/></svg>
<span class="t" id="mtitle" style="left:1328.9px;top:47.98px;font-size:16.04px;color:#333">第一章知识梳理</span>
<svg class="abs" style="left:1515px;top:54.3px" width="18" height="3.4" viewBox="0 0 18 3.4"><circle cx="1.7" cy="1.7" r="1.6" fill="#222"/><circle cx="9" cy="1.7" r="1.6" fill="#222"/><circle cx="16.2" cy="1.7" r="1.6" fill="#222"/></svg>
<div class="abs" style="left:1222px;top:76px;width:325px;height:1px;background:#f0f0f0"></div>
<div class="abs" style="left:1236.2px;top:91.1px;width:297px;height:28.5px;border-radius:4px;background:#f2f3f5"></div>
<svg class="abs" style="left:1246.8px;top:99px" width="13" height="13" viewBox="0 0 13 13"><circle cx="5.5" cy="5.5" r="4.6" fill="none" stroke="#bcbcbc" stroke-width=".9"/><path d="M8.9 8.9l3.3 3.3" stroke="#bcbcbc" stroke-width=".9"/></svg>
<span class="t" id="mph" style="left:1265.7px;top:101.35px;font-size:12.3px;color:#b6b6b6">输入学生姓名</span>
<span class="t" id="mt1" style="left:1243.9px;top:150.7px;font-size:14.6px;color:#2c9cf5">未批阅 (0)</span>
<span class="t" id="mt2" style="left:1352.6px;top:150.7px;font-size:14.6px;color:#8a8a8a">已批阅 (24)</span>
<div class="abs" style="left:1222px;top:177px;width:325px;height:1px;background:#efefef"></div>
<div class="abs" style="left:1262.9px;top:174.4px;width:27.1px;height:3.5px;border-radius:1.8px;background:#2c9cf5"></div>
<span class="t" id="mc1" style="left:1233.6px;top:193px;font-size:14px;color:#555">无机化学–化学反应原理班</span>
<div class="abs" style="left:1222px;top:223.7px;width:325px;height:1px;background:#ebebeb"></div>
<span class="t" id="mc2" style="left:1233.6px;top:242.3px;font-size:14px;color:#555">无机化学<span style="letter-spacing:-1.2px">19101</span>（<span style="letter-spacing:.4px">24)</span></span>
<svg width="0" height="0" style="position:absolute"><defs><filter id="blur" x="-5%" y="-5%" width="110%" height="110%"><feGaussianBlur stdDeviation=".72"/></filter></defs></svg>
<svg class="abs" style="left:1234.4px;top:285.8px" width="31.6" height="31.6" viewBox="0 0 32 32"><defs><clipPath id="c1250_302"><circle cx="16" cy="16" r="16"/></clipPath></defs><g clip-path="url(#c1250_302)"><g filter="url(#blur)"><rect width="32" height="32" fill="#d9c2a2"/><rect x="0" y="7" width="9" height="21" fill="#789848"/><circle cx="3" cy="14" r="2" fill="#4a6a2c"/><circle cx="6" cy="21" r="2.2" fill="#51722f"/><circle cx="4" cy="10" r="1.3" fill="#a9c070"/><path d="M3 13C4 4 11 0 17 0s9 3 10 8l-1 5H5z" fill="#c9a77a"/><rect x="26" y="2" width="6" height="5" fill="#a8c890"/><path d="M26 6c3-2 6-1 6 3v9l-5 1z" fill="#e99584"/><rect x="27" y="15" width="5" height="10" fill="#efd9d2"/><path d="M9 6c2-5 11-6 14-1l2 6 4 14-3 5-8-2-10-4-3-2c2-5 2-11 4-16z" fill="#2a1a17"/><ellipse cx="17.7" cy="11.700" rx="5.400" ry="8" fill="#e8b99c"/><path d="M11 19l6 2 5-4 2 6 2 6-4 3H12l-3-5z" fill="#e2ae90"/><circle cx="15.200" cy="9.800" r="2.500" fill="#3a2c2a" stroke="#f1e3d8" stroke-width="1"/><circle cx="22" cy="9.800" r="2.300" fill="#3a2c2a" stroke="#f1e3d8" stroke-width="1"/><path d="M17.600 9.400h2.200" stroke="#f1e3d8" stroke-width=".8"/><ellipse cx="18.700" cy="15.300" rx="1.700" ry=".9" fill="#c8505c"/><path d="M20 13l6 3 3 9-3 4-5-8z" fill="#2a1a17"/><path d="M10 24l2.200 8" stroke="#3a2a28" stroke-width="1.300"/><path d="M12 32c1-3 3-5 7-5s7 1 8 5z" fill="#ee5f7a"/><circle cx="17" cy="29.500" r=".9" fill="#fbe4e8"/><circle cx="21" cy="30" r=".9" fill="#fbe4e8"/><circle cx="24" cy="29" r=".8" fill="#fbe4e8"/></g></g></svg>
<span class="t" style="left:1497.2px;top:297.4px;font-size:11px;color:#b9b9b9">未批</span>
<svg class="abs" style="left:1528px;top:296.6px" width="6.5" height="10" viewBox="0 0 6.5 10"><path d="M.6.6L5.7 5 .6 9.4" fill="none" stroke="#b4b4b4" stroke-width=".9"/></svg>
<svg class="abs" style="left:1234.4px;top:337.8px" width="31.6" height="31.6" viewBox="0 0 32 32"><defs><clipPath id="c1250_354"><circle cx="16" cy="16" r="16"/></clipPath></defs><g clip-path="url(#c1250_354)"><g filter="url(#blur)"><rect width="32" height="32" fill="#6f7d96"/><rect x="0" y="18" width="14" height="14" fill="#5f6f8a"/><rect x="0" y="6" width="5" height="14" fill="#8593ab"/><path d="M3 10C5 3 12 0 18 0c8 0 14 5 14 12l-1 9-5 1-2-8-4-5-6-1-5 3-4 2z" fill="#2b2328"/><path d="M9.200 8l7-1.500 5 1.500 3 6 2 6-5 4-10.400 3-2-4.500-2-1 .5-3.500-2.500-.5 2-5z" fill="#f0dcd0"/><path d="M9 11.500c3-1 6-.5 9 1.500l-1 2c-3-1-6-1.500-8-1z" fill="#3a2a2c" opacity=".85"/><ellipse cx="27.500" cy="17.500" rx="2.200" ry="3.200" fill="#ecc8bc"/><ellipse cx="27.800" cy="17.500" rx=".9" ry="1.600" fill="#f8ece6"/><ellipse cx="9.500" cy="22.500" rx="1.800" ry=".9" fill="#b06a6c"/><path d="M14 25l8-3 3-2 5 6v6H13z" fill="#e9d2c4"/><path d="M13 26l9-3.500-2 5.500-4 4h-4z" fill="#2c2629"/><path d="M25 20l4-1 3 4v9h-4z" fill="#efddd2"/></g></g></svg>
<span class="t" style="left:1497.2px;top:349.4px;font-size:11px;color:#b9b9b9">未批</span>
<svg class="abs" style="left:1528px;top:348.6px" width="6.5" height="10" viewBox="0 0 6.5 10"><path d="M.6.6L5.7 5 .6 9.4" fill="none" stroke="#b4b4b4" stroke-width=".9"/></svg>
<svg class="abs" style="left:1234.4px;top:390.2px" width="31.6" height="31.6" viewBox="0 0 32 32"><defs><clipPath id="c1250_406"><circle cx="16" cy="16" r="16"/></clipPath></defs><g clip-path="url(#c1250_406)"><g filter="url(#blur)"><rect width="32" height="32" fill="#6a5f5c"/><rect x="22" y="2" width="10" height="13" fill="#e8e4e2"/><path d="M22 14l10 4v8l-4 2-7-8z" fill="#3e3c3e"/><path d="M25 17l6 3" stroke="#77747a" stroke-width="1"/><path d="M0 26C0 10 4 2 12 0h10l4 3-2 7-17 16z" fill="#4a4040"/><ellipse cx="14.300" cy="14" rx="7.600" ry="10" fill="#ead2c6"/><path d="M7 10.800l4.500-.8M15.500 9.600l4-.9" stroke="#4a3a38" stroke-width="1.500" stroke-linecap="round"/><ellipse cx="14" cy="13.500" rx="1.500" ry="2.500" fill="#f6e6de"/><ellipse cx="15" cy="20.200" rx="3.200" ry="2.500" fill="#6a3a40"/><path d="M12.300 19.200h5.400" stroke="#f4efee" stroke-width="1"/><ellipse cx="15.200" cy="21.400" rx="1.800" ry=".9" fill="#c88a92"/><path d="M0 32c1-6 5-9 11-9l5 2 6-3c4 1 6 4 7 10z" fill="#e6e6e8"/></g></g></svg>
<span class="t" style="left:1497.2px;top:401.8px;font-size:11px;color:#b9b9b9">未批</span>
<svg class="abs" style="left:1528px;top:401px" width="6.5" height="10" viewBox="0 0 6.5 10"><path d="M.6.6L5.7 5 .6 9.4" fill="none" stroke="#b4b4b4" stroke-width=".9"/></svg>
<svg class="abs" style="left:1234.4px;top:442.2px" width="31.6" height="31.6" viewBox="0 0 32 32"><defs><clipPath id="c1250_458"><circle cx="16" cy="16" r="16"/></clipPath></defs><g clip-path="url(#c1250_458)"><g filter="url(#blur)"><rect width="32" height="32" fill="#b6e3fa"/><rect y="9" width="32" height="5" fill="#c9ebfb"/><rect x="0" y="12" width="10" height="11" fill="#5f9080"/><rect x="25" y="11.500" width="7" height="8" fill="#4f8a80"/><rect x="0" y="20" width="32" height="12" fill="#b8ccb4"/><circle cx="3" cy="14" r="1" fill="#e8e080"/><circle cx="7" cy="17" r=".9" fill="#e8e080"/><path d="M15 10c2-4 9-4 11 1l2 14c-1 4-10 5-13 2l-2-8z" fill="#f8fbfd"/><path d="M8.500 12c1-5 7-6 8-1l-1 6-3 2-3-1z" fill="#15151a"/><path d="M13 15.500l3 .5-1 2-2-.5z" fill="#f2c8b8"/><path d="M3.500 27l7-8 3 1-5 8z" fill="#f0d2c2"/><path d="M8 28l4-5 2 1-3 5z" fill="#f3dccf"/><path d="M11 23c2-1 5-1 6.500 0l-.5 4.500H11.500z" fill="#20282a"/><rect x="0" y="27" width="32" height="5" fill="#cfdcc8"/><circle cx="11" cy="28.500" r="1" fill="#e6dc70"/><circle cx="20" cy="30" r="1" fill="#f4f4e8"/><circle cx="6" cy="30" r=".9" fill="#8fb08a"/></g></g></svg>
<span class="t" style="left:1497.2px;top:453.8px;font-size:11px;color:#b9b9b9">未批</span>
<svg class="abs" style="left:1528px;top:453px" width="6.5" height="10" viewBox="0 0 6.5 10"><path d="M.6.6L5.7 5 .6 9.4" fill="none" stroke="#b4b4b4" stroke-width=".9"/></svg>
<svg class="abs" style="left:1234.4px;top:493.4px" width="31.6" height="31.6" viewBox="0 0 32 32"><defs><clipPath id="c1250_509"><circle cx="16" cy="16" r="16"/></clipPath></defs><g clip-path="url(#c1250_509)"><g filter="url(#blur)"><rect width="32" height="32" fill="#a9c0ea"/><rect x="0" y="8" width="6" height="14" fill="#9bb4e6"/><path d="M22 1l5 2 3 9-1 8-5-2-3-9z" fill="#f0dcd4"/><path d="M7 17C6 8 10 2 17 1c6 0 9 4 9 10l-1 7-6 1-5-1z" fill="#4a2a2c"/><ellipse cx="16.800" cy="10.400" rx="4.300" ry="5.600" fill="#f3d8cc" transform="rotate(18 16.800 10.400)"/><path d="M13.500 8.500l3 .6M18.500 9.800l2.500.8" stroke="#5a3a38" stroke-width=".9"/><ellipse cx="15.800" cy="13.600" rx="1.300" ry=".7" fill="#d8707a" transform="rotate(18 15.800 13.600)"/><path d="M22 12l3-1 1 7-4 1z" fill="#4a2a2c"/><path d="M1 32c0-9 4-15 10-17l5 2 7-1c6 2 9 8 9 16z" fill="#f1e0da"/><path d="M12.500 15.500l4 2 3-1.500 1 16h-7z" fill="#f9f2ee"/><path d="M9 18l-2 14M24 18l2 14" stroke="#e0ccc6" stroke-width=".9"/></g></g></svg>
<span class="t" style="left:1497.2px;top:505px;font-size:11px;color:#b9b9b9">未批</span>
<svg class="abs" style="left:1528px;top:504.2px" width="6.5" height="10" viewBox="0 0 6.5 10"><path d="M.6.6L5.7 5 .6 9.4" fill="none" stroke="#b4b4b4" stroke-width=".9"/></svg>
<svg class="abs" style="left:1234.4px;top:546.6px" width="31.6" height="31.6" viewBox="0 0 32 32"><defs><clipPath id="c1250_562"><circle cx="16" cy="16" r="16"/></clipPath></defs><g clip-path="url(#c1250_562)"><g filter="url(#blur)"><rect width="32" height="32" fill="#e8ecea"/><path d="M0 14C3 8 6 3 7.500 2.700c2 1 3 5 5 8l5 6H0z" fill="#6a8a7c"/><path d="M5 8l2.500-4 2 4 1 4z" fill="#8aa498"/><path d="M19 15c4-3 8-6 13-7v9z" fill="#9ab0a6"/><path d="M23 13l8-4" stroke="#e0e6e2" stroke-width="1.500"/><rect x="0" y="15" width="32" height="8.500" fill="#1f3a2a"/><path d="M0 15c4-1 8-1 10 0v3H0zM20 15.500c4-1.500 8-1.500 12-.5v3H20z" fill="#2c4a36"/><rect x="0" y="23" width="32" height="9" fill="#2c4a3c"/><path d="M2.500 22.400h7v1h-7zM21 22.400h9v.9h-9z" fill="#c8ccc0"/><rect x="9.200" y="17.500" width="10.800" height="6.200" fill="#f4efe8"/><path d="M11 19v3M14 19v3M17 19v3" stroke="#c9c4bc" stroke-width=".8"/><path d="M9 18.200c.5-3 2.500-4.500 5.500-4.500s5 1.500 5.500 4.500z" fill="#8a2a20"/><circle cx="13.500" cy="11.600" r="1.300" fill="#8f3528"/><circle cx="16.600" cy="12.500" r="1.200" fill="#8f3528"/><path d="M13.500 10.300V8.500M16.600 11.300V9.800" stroke="#6a5a50" stroke-width=".5"/><path d="M12.800 12.500h1.400v2h-1.400zM16 13.400h1.300v1.500H16z" fill="#ece6de"/><rect x="9.200" y="24" width="10.500" height="7" fill="#d8dcd0" opacity=".85"/><rect x="9.200" y="23.700" width="10.800" height=".8" fill="#55705f"/></g></g></svg>
<span class="t" style="left:1497.2px;top:558.2px;font-size:11px;color:#b9b9b9">未批</span>
<svg class="abs" style="left:1528px;top:557.4px" width="6.5" height="10" viewBox="0 0 6.5 10"><path d="M.6.6L5.7 5 .6 9.4" fill="none" stroke="#b4b4b4" stroke-width=".9"/></svg>
<svg class="abs" style="left:1236.4px;top:596.4px" width="31.6" height="31.6" viewBox="0 0 32 32"><defs><clipPath id="c1252_612"><circle cx="16" cy="16" r="16"/></clipPath></defs><g clip-path="url(#c1252_612)"><g filter="url(#blur)"><rect width="32" height="32" fill="#6f7d96"/><rect x="0" y="18" width="14" height="14" fill="#5f6f8a"/><rect x="0" y="6" width="5" height="14" fill="#8593ab"/><path d="M3 10C5 3 12 0 18 0c8 0 14 5 14 12l-1 9-5 1-2-8-4-5-6-1-5 3-4 2z" fill="#2b2328"/><path d="M9.200 8l7-1.500 5 1.500 3 6 2 6-5 4-10.400 3-2-4.500-2-1 .5-3.500-2.500-.5 2-5z" fill="#f0dcd0"/><path d="M9 11.500c3-1 6-.5 9 1.500l-1 2c-3-1-6-1.500-8-1z" fill="#3a2a2c" opacity=".85"/><ellipse cx="27.500" cy="17.500" rx="2.200" ry="3.200" fill="#ecc8bc"/><ellipse cx="27.800" cy="17.500" rx=".9" ry="1.600" fill="#f8ece6"/><ellipse cx="9.500" cy="22.500" rx="1.800" ry=".9" fill="#b06a6c"/><path d="M14 25l8-3 3-2 5 6v6H13z" fill="#e9d2c4"/><path d="M13 26l9-3.500-2 5.500-4 4h-4z" fill="#2c2629"/><path d="M25 20l4-1 3 4v9h-4z" fill="#efddd2"/></g></g></svg>
<span class="t" style="left:1499.2px;top:608px;font-size:11px;color:#b9b9b9">未批</span>
<svg class="abs" style="left:1530px;top:607.2px" width="6.5" height="10" viewBox="0 0 6.5 10"><path d="M.6.6L5.7 5 .6 9.4" fill="none" stroke="#b4b4b4" stroke-width=".9"/></svg>
<svg class="abs" style="left:1236.4px;top:648.5px" width="31.6" height="31.6" viewBox="0 0 32 32"><defs><clipPath id="c1252_664"><circle cx="16" cy="16" r="16"/></clipPath></defs><g clip-path="url(#c1252_664)"><g filter="url(#blur)"><rect width="32" height="32" fill="#6a5f5c"/><rect x="22" y="2" width="10" height="13" fill="#e8e4e2"/><path d="M22 14l10 4v8l-4 2-7-8z" fill="#3e3c3e"/><path d="M25 17l6 3" stroke="#77747a" stroke-width="1"/><path d="M0 26C0 10 4 2 12 0h10l4 3-2 7-17 16z" fill="#4a4040"/><ellipse cx="14.300" cy="14" rx="7.600" ry="10" fill="#ead2c6"/><path d="M7 10.800l4.500-.8M15.500 9.600l4-.9" stroke="#4a3a38" stroke-width="1.500" stroke-linecap="round"/><ellipse cx="14" cy="13.500" rx="1.500" ry="2.500" fill="#f6e6de"/><ellipse cx="15" cy="20.200" rx="3.200" ry="2.500" fill="#6a3a40"/><path d="M12.300 19.200h5.400" stroke="#f4efee" stroke-width="1"/><ellipse cx="15.200" cy="21.400" rx="1.800" ry=".9" fill="#c88a92"/><path d="M0 32c1-6 5-9 11-9l5 2 6-3c4 1 6 4 7 10z" fill="#e6e6e8"/></g></g></svg>
<span class="t" style="left:1499.2px;top:660.1px;font-size:11px;color:#b9b9b9">未批</span>
<svg class="abs" style="left:1530px;top:659.3px" width="6.5" height="10" viewBox="0 0 6.5 10"><path d="M.6.6L5.7 5 .6 9.4" fill="none" stroke="#b4b4b4" stroke-width=".9"/></svg>
<svg class="abs" style="left:1236.4px;top:701.1px" width="31.6" height="31.6" viewBox="0 0 32 32"><defs><clipPath id="c1252_717"><circle cx="16" cy="16" r="16"/></clipPath></defs><g clip-path="url(#c1252_717)"><g filter="url(#blur)"><rect width="32" height="32" fill="#b6e3fa"/><rect y="9" width="32" height="5" fill="#c9ebfb"/><rect x="0" y="12" width="10" height="11" fill="#5f9080"/><rect x="25" y="11.500" width="7" height="8" fill="#4f8a80"/><rect x="0" y="20" width="32" height="12" fill="#b8ccb4"/><circle cx="3" cy="14" r="1" fill="#e8e080"/><circle cx="7" cy="17" r=".9" fill="#e8e080"/><path d="M15 10c2-4 9-4 11 1l2 14c-1 4-10 5-13 2l-2-8z" fill="#f8fbfd"/><path d="M8.500 12c1-5 7-6 8-1l-1 6-3 2-3-1z" fill="#15151a"/><path d="M13 15.500l3 .5-1 2-2-.5z" fill="#f2c8b8"/><path d="M3.500 27l7-8 3 1-5 8z" fill="#f0d2c2"/><path d="M8 28l4-5 2 1-3 5z" fill="#f3dccf"/><path d="M11 23c2-1 5-1 6.500 0l-.5 4.500H11.500z" fill="#20282a"/><rect x="0" y="27" width="32" height="5" fill="#cfdcc8"/><circle cx="11" cy="28.500" r="1" fill="#e6dc70"/><circle cx="20" cy="30" r="1" fill="#f4f4e8"/><circle cx="6" cy="30" r=".9" fill="#8fb08a"/></g></g></svg>
<span class="t" style="left:1499.2px;top:712.7px;font-size:11px;color:#b9b9b9">未批</span>
<svg class="abs" style="left:1530px;top:711.9px" width="6.5" height="10" viewBox="0 0 6.5 10"><path d="M.6.6L5.7 5 .6 9.4" fill="none" stroke="#b4b4b4" stroke-width=".9"/></svg>
<div class="abs" style="left:1277.8px;top:326.8px;width:256.4px;height:1px;background:#eeeeee"></div>
<div class="abs" style="left:1277.8px;top:378.7px;width:256.4px;height:1px;background:#eeeeee"></div>
<div class="abs" style="left:1277.8px;top:430.9px;width:256.4px;height:1px;background:#eeeeee"></div>
<div class="abs" style="left:1277.8px;top:482.5px;width:256.4px;height:1px;background:#eeeeee"></div>
<div class="abs" style="left:1277.8px;top:534.5px;width:256.4px;height:1px;background:#eeeeee"></div>
<div class="abs" style="left:1277.8px;top:586.5px;width:256.4px;height:1px;background:#eeeeee"></div>
<div class="abs" style="left:1279.8px;top:637.5px;width:256.4px;height:1px;background:#eeeeee"></div>
<div class="abs" style="left:1279.8px;top:688.9px;width:256.4px;height:1px;background:#eeeeee"></div>
<i class="mz" style="left:1278.2px;top:286.3px;width:8.6px;height:8.5px;background:#f4f4f4"></i>
<i class="mz" style="left:1295.3px;top:286.3px;width:8.6px;height:8.5px;background:#a0a0a0"></i>
<i class="mz" style="left:1303.9px;top:286.3px;width:8.6px;height:8.5px;background:#999"></i>
<i class="mz" style="left:1278.2px;top:294.7px;width:8.6px;height:8.5px;background:#8a8a8a"></i>
<i class="mz" style="left:1286.8px;top:294.7px;width:8.6px;height:8.5px;background:#f0f0f0"></i>
<i class="mz" style="left:1295.3px;top:294.7px;width:8.6px;height:8.5px;background:#d8d8d8"></i>
<i class="mz" style="left:1303.9px;top:294.7px;width:8.6px;height:8.5px;background:#999"></i>
<i class="mz" style="left:1321px;top:294.7px;width:8.6px;height:8.5px;background:#e0e0e0"></i>
<div class="abs" style="left:1322.3px;top:288px;width:6.2px;height:6px;background:#555;border:1px solid #888"></div><div class="abs" style="left:1324.2px;top:290.5px;width:4.3px;height:3.5px;background:#e8e8e8"></div>
<span class="t" style="left:1278px;top:305.95px;font-size:9.5px;color:#c4c4c4;letter-spacing:.3px">1u</span><span class="t" style="left:1325.5px;top:306.95px;font-size:9.5px;color:#c4c4c4">)</span>
<i class="mz" style="left:1286.8px;top:303.1px;width:8.6px;height:8.5px;background:#f7f7f7"></i>
<i class="mz" style="left:1295.3px;top:303.1px;width:8.6px;height:8.5px;background:#f7f7f7"></i>
<i class="mz" style="left:1303.9px;top:303.1px;width:8.6px;height:8.5px;background:#f7f7f7"></i>
<i class="mz" style="left:1312.4px;top:303.1px;width:8.6px;height:8.5px;background:#f7f7f7"></i>
<i class="mz" style="left:1295.3px;top:311.5px;width:8.6px;height:8.5px;background:#f8f8f8"></i>
<i class="mz" style="left:1303.9px;top:311.5px;width:8.6px;height:8.5px;background:#f8f8f8"></i>
<i class="mz" style="left:1312.4px;top:311.5px;width:8.6px;height:8.5px;background:#f8f8f8"></i>
<i class="mz" style="left:1278.2px;top:337.6px;width:8.6px;height:8.5px;background:#808080"></i>
<i class="mz" style="left:1295.3px;top:337.6px;width:8.6px;height:8.5px;background:#a8a8a8"></i>
<i class="mz" style="left:1278.2px;top:346px;width:8.6px;height:8.5px;background:#f4f4f4"></i>
<i class="mz" style="left:1286.8px;top:346px;width:8.6px;height:8.5px;background:#f2f2f2"></i>
<i class="mz" style="left:1295.3px;top:346px;width:8.6px;height:8.5px;background:#999"></i>
<i class="mz" style="left:1286.8px;top:354.4px;width:8.6px;height:8.5px;background:#cfcfcf"></i>
<i class="mz" style="left:1295.3px;top:354.4px;width:8.6px;height:8.5px;background:#f0f0f0"></i>
<i class="mz" style="left:1303.9px;top:354.4px;width:8.6px;height:8.5px;background:#eeeeee"></i>
<i class="mz" style="left:1312.4px;top:354.4px;width:8.6px;height:8.5px;background:#cccccc"></i>
<i class="mz" style="left:1321px;top:354.4px;width:8.6px;height:8.5px;background:#f7f7f7"></i>
<i class="mz" style="left:1286.8px;top:362.8px;width:8.6px;height:8.5px;background:#f7f7f7"></i>
<i class="mz" style="left:1278.2px;top:389.6px;width:8.6px;height:8.5px;background:#cccccc"></i>
<i class="mz" style="left:1295.3px;top:389.6px;width:8.6px;height:8.5px;background:#888"></i>
<i class="mz" style="left:1303.9px;top:389.6px;width:8.6px;height:8.5px;background:#8a8a8a"></i>
<i class="mz" style="left:1278.2px;top:398px;width:8.6px;height:8.5px;background:#666"></i>
<i class="mz" style="left:1295.3px;top:398px;width:8.6px;height:8.5px;background:#bbbbbb"></i>
<i class="mz" style="left:1303.9px;top:398px;width:8.6px;height:8.5px;background:#999"></i>
<i class="mz" style="left:1286.8px;top:406.4px;width:8.6px;height:8.5px;background:#f6f6f6"></i>
<i class="mz" style="left:1286.8px;top:414.8px;width:8.6px;height:8.5px;background:#f4f4f4"></i>
<i class="mz" style="left:1295.3px;top:406.4px;width:8.6px;height:8.5px;background:#f6f6f6"></i>
<i class="mz" style="left:1295.3px;top:414.8px;width:8.6px;height:8.5px;background:#f8f8f8"></i>
<i class="mz" style="left:1303.9px;top:406.4px;width:8.6px;height:8.5px;background:#f6f6f6"></i>
<i class="mz" style="left:1303.9px;top:414.8px;width:8.6px;height:8.5px;background:#f4f4f4"></i>
<i class="mz" style="left:1312.4px;top:406.4px;width:8.6px;height:8.5px;background:#f6f6f6"></i>
<i class="mz" style="left:1312.4px;top:414.8px;width:8.6px;height:8.5px;background:#f8f8f8"></i>
<i class="mz" style="left:1321px;top:406.4px;width:8.6px;height:8.5px;background:#fbfbfb"></i>
<i class="mz" style="left:1278.2px;top:441px;width:8.6px;height:8.5px;background:#888"></i>
<i class="mz" style="left:1295.3px;top:441px;width:8.6px;height:8.5px;background:#888"></i>
<i class="mz" style="left:1303.9px;top:441px;width:8.6px;height:8.5px;background:#dddddd"></i>
<i class="mz" style="left:1278.2px;top:449.4px;width:8.6px;height:8.5px;background:#cccccc"></i>
<i class="mz" style="left:1295.3px;top:449.4px;width:8.6px;height:8.5px;background:#999"></i>
<i class="mz" style="left:1303.9px;top:449.4px;width:8.6px;height:8.5px;background:#eeeeee"></i>
<i class="mz" style="left:1286.8px;top:467px;width:8.6px;height:8.5px;background:#cccccc"></i>
<i class="mz" style="left:1295.3px;top:467px;width:8.6px;height:8.5px;background:#e4e4e4"></i>
<i class="mz" style="left:1303.9px;top:467px;width:8.6px;height:8.5px;background:#dddddd"></i>
<i class="mz" style="left:1312.4px;top:467px;width:8.6px;height:8.5px;background:#f5f5f5"></i>
<i class="mz" style="left:1278.2px;top:493.3px;width:8.6px;height:8.5px;background:#999"></i>
<i class="mz" style="left:1295.3px;top:493.3px;width:8.6px;height:8.5px;background:#777"></i>
<i class="mz" style="left:1278.2px;top:501.7px;width:8.6px;height:6.2px;background:#a4a4a4"></i>
<i class="mz" style="left:1286.8px;top:501.7px;width:8.6px;height:6.2px;background:#ececec"></i>
<i class="mz" style="left:1295.3px;top:501.7px;width:8.6px;height:6.2px;background:#999"></i>
<span class="t" id="unv1" style="left:1278.3px;top:516.05px;font-size:10.3px;color:#a9a9a9">未认证</span>
<i class="mz" style="left:1278.2px;top:545.4px;width:8.6px;height:8.5px;background:#999"></i>
<i class="mz" style="left:1295.3px;top:545.4px;width:8.6px;height:8.5px;background:#ececec"></i>
<i class="mz" style="left:1303.9px;top:545.4px;width:8.6px;height:8.5px;background:#bbbbbb"></i>
<i class="mz" style="left:1278.2px;top:553.8px;width:8.6px;height:8.5px;background:#f5f5f5"></i>
<i class="mz" style="left:1303.9px;top:553.8px;width:8.6px;height:8.5px;background:#777"></i>
<span class="t" id="unv2" style="left:1278.3px;top:567.05px;font-size:10.3px;color:#a9a9a9">未认证</span>
<i class="mz" style="left:1280.2px;top:596.3px;width:8.6px;height:8.5px;background:#808080"></i>
<i class="mz" style="left:1297.3px;top:596.3px;width:8.6px;height:8.5px;background:#a8a8a8"></i>
<i class="mz" style="left:1280.2px;top:604.7px;width:8.6px;height:8.5px;background:#f4f4f4"></i>
<i class="mz" style="left:1288.8px;top:604.7px;width:8.6px;height:8.5px;background:#f2f2f2"></i>
<i class="mz" style="left:1297.3px;top:604.7px;width:8.6px;height:8.5px;background:#999"></i>
<i class="mz" style="left:1288.8px;top:613.1px;width:8.6px;height:8.5px;background:#cfcfcf"></i>
<i class="mz" style="left:1297.3px;top:613.1px;width:8.6px;height:8.5px;background:#f0f0f0"></i>
<i class="mz" style="left:1305.9px;top:613.1px;width:8.6px;height:8.5px;background:#eeeeee"></i>
<i class="mz" style="left:1314.4px;top:613.1px;width:8.6px;height:8.5px;background:#cccccc"></i>
<i class="mz" style="left:1323px;top:613.1px;width:8.6px;height:8.5px;background:#f7f7f7"></i>
<i class="mz" style="left:1288.8px;top:621.5px;width:8.6px;height:8.5px;background:#f7f7f7"></i>
<i class="mz" style="left:1280.2px;top:648.6px;width:8.6px;height:8.5px;background:#cccccc"></i>
<i class="mz" style="left:1297.3px;top:648.6px;width:8.6px;height:8.5px;background:#888"></i>
<i class="mz" style="left:1305.9px;top:648.6px;width:8.6px;height:8.5px;background:#8a8a8a"></i>
<i class="mz" style="left:1280.2px;top:657px;width:8.6px;height:8.5px;background:#666"></i>
<i class="mz" style="left:1297.3px;top:657px;width:8.6px;height:8.5px;background:#bbbbbb"></i>
<i class="mz" style="left:1305.9px;top:657px;width:8.6px;height:8.5px;background:#999"></i>
<i class="mz" style="left:1288.8px;top:665.4px;width:8.6px;height:8.5px;background:#f6f6f6"></i>
<i class="mz" style="left:1288.8px;top:673.8px;width:8.6px;height:8.5px;background:#f4f4f4"></i>
<i class="mz" style="left:1297.3px;top:665.4px;width:8.6px;height:8.5px;background:#f6f6f6"></i>
<i class="mz" style="left:1297.3px;top:673.8px;width:8.6px;height:8.5px;background:#f8f8f8"></i>
<i class="mz" style="left:1305.9px;top:665.4px;width:8.6px;height:8.5px;background:#f6f6f6"></i>
<i class="mz" style="left:1305.9px;top:673.8px;width:8.6px;height:8.5px;background:#f4f4f4"></i>
<i class="mz" style="left:1314.4px;top:665.4px;width:8.6px;height:8.5px;background:#f6f6f6"></i>
<i class="mz" style="left:1314.4px;top:673.8px;width:8.6px;height:8.5px;background:#f8f8f8"></i>
<i class="mz" style="left:1323px;top:665.4px;width:8.6px;height:8.5px;background:#fbfbfb"></i>
<i class="mz" style="left:1280.2px;top:700.2px;width:8.6px;height:8.5px;background:#888"></i>
<i class="mz" style="left:1297.3px;top:700.2px;width:8.6px;height:8.5px;background:#888"></i>
<i class="mz" style="left:1305.9px;top:700.2px;width:8.6px;height:8.5px;background:#dddddd"></i>
<i class="mz" style="left:1280.2px;top:708.6px;width:8.6px;height:8.5px;background:#cccccc"></i>
<i class="mz" style="left:1297.3px;top:708.6px;width:8.6px;height:8.5px;background:#999"></i>
<i class="mz" style="left:1305.9px;top:708.6px;width:8.6px;height:8.5px;background:#eeeeee"></i>
<i class="mz" style="left:1288.8px;top:726.2px;width:8.6px;height:8.5px;background:#cccccc"></i>
<i class="mz" style="left:1297.3px;top:726.2px;width:8.6px;height:8.5px;background:#e4e4e4"></i>
<i class="mz" style="left:1305.9px;top:726.2px;width:8.6px;height:8.5px;background:#dddddd"></i>
<i class="mz" style="left:1314.4px;top:726.2px;width:8.6px;height:8.5px;background:#f5f5f5"></i>
<div class="abs" style="left:1337.2px;top:287.2px;width:24px;height:11.4px;border:1px solid #f9a3a3"></div>
<span class="t" style="left:1341.8px;top:289px;font-size:7.4px;color:#f57f7f">重交</span>
<div class="abs" style="left:1365px;top:287.2px;width:24px;height:11.4px;border:1px solid #f9a3a3"></div>
<span class="t" style="left:1369.6px;top:289px;font-size:7.4px;color:#f57f7f">迟交</span>
<div class="abs" style="left:1323.5px;top:393.4px;width:24px;height:11.4px;border:1px solid #f9a3a3"></div>
<span class="t" style="left:1328.1px;top:395.2px;font-size:7.4px;color:#f57f7f">迟交</span>
<div class="abs" style="left:1325.3px;top:651.8px;width:24px;height:11.4px;border:1px solid #f9a3a3"></div>
<span class="t" style="left:1329.9px;top:653.6px;font-size:7.4px;color:#f57f7f">迟交</span>
<div class="abs" style="left:1388.5px;top:178px;width:12px;height:47px;background:#fff"></div><div class="abs" style="left:1394.7px;top:80px;width:6px;height:176px;background:linear-gradient(90deg,rgba(255,255,255,.7),#fff 60%)"></div>
<div class="abs" style="left:1396.8px;top:85.4px;width:140.6px;height:164.3px;border-radius:5px;background:#fff;box-shadow:0 1px 9px rgba(0,0,0,.16)"></div>
<div class="abs" style="left:1515.3px;top:81.3px;width:10px;height:10px;background:#fff;transform:rotate(45deg);box-shadow:-1px -1px 2px rgba(0,0,0,.06)"></div>
<div class="abs" style="left:1505px;top:85.4px;width:30px;height:8px;background:#fff"></div>
<div class="abs" style="left:1399px;top:124.4px;width:138.4px;height:1px;background:#ededed"></div>
<div class="abs" style="left:1399px;top:166.8px;width:138.4px;height:1px;background:#ededed"></div>
<div class="abs" style="left:1399px;top:210.1px;width:138.4px;height:1px;background:#ededed"></div>
<span class="t" id="pm0" style="left:1436.7px;top:99.33px;font-size:14.15px;color:#333">发布成绩</span>
<span class="t" id="pm1" style="left:1436.7px;top:141.53px;font-size:14.15px;color:#333">公布答案</span>
<span class="t" id="pm2" style="left:1436.7px;top:184.93px;font-size:14.15px;color:#333">重阅客观题</span>
<span class="t" id="pm3" style="left:1436.7px;top:226.43px;font-size:14.15px;color:#333">全部催交</span>
<svg class="abs" style="left:1409.8px;top:96.8px" width="16.4" height="16.4" viewBox="0 0 16.4 16.4"><circle cx="8.2" cy="8.2" r="7.6" fill="none" stroke="#444" stroke-width="1.05"/><path d="M4.6 11.7L7.4 4.9l2.8 6.8M5.6 9.5h3.6" fill="none" stroke="#444" stroke-width="1.05"/><path d="M10.2 5.4h2.6M11.5 4.1v2.6" stroke="#444" stroke-width=".8"/></svg>
<svg class="abs" style="left:1411px;top:139.7px" width="13.6" height="16.4" viewBox="0 0 13.6 16.4"><rect x=".6" y=".6" width="12.4" height="15.2" rx="1.2" fill="none" stroke="#444" stroke-width="1.05"/><path d="M3.4.6v15.2" stroke="#444" stroke-width="1.05"/><path d="M6.3 5.4l1.3 1.3 2.6-2.6" fill="none" stroke="#444" stroke-width="1.05"/><path d="M6.6 9.8l3 3M9.6 9.8l-3 3" stroke="#444" stroke-width="1.05"/></svg>
<svg class="abs" style="left:1409.8px;top:182.8px" width="16.2" height="16.2" viewBox="0 0 15.6 15.6"><rect x=".6" y=".6" width="14.4" height="14.4" rx="2" fill="none" stroke="#444" stroke-width="1.05"/><path d="M10.6 6.1A3.3 3.3 0 1 0 11 8.6" fill="none" stroke="#444" stroke-width="1.05"/><path d="M11.1 4.3v2.1H9" fill="none" stroke="#444" stroke-width="1.05"/></svg>
<svg class="abs" style="left:1409.5px;top:222.8px" width="16.8" height="17" viewBox="0 0 16.8 17"><path d="M3.6 16V9.5a4.8 4.8 0 0 1 9.6 0V16M1 16.3h14.8" fill="none" stroke="#444" stroke-width="1.05"/><path d="M8.4 2.6V.4M3.3 4.2L1.8 2.7M13.5 4.2L15 2.7" stroke="#444" stroke-width="1.05"/><path d="M9.2 8.2l-2 3.2h2.4l-1.8 3" fill="none" stroke="#444" stroke-width=".8"/></svg>

</div></div>

</body>
</html>
